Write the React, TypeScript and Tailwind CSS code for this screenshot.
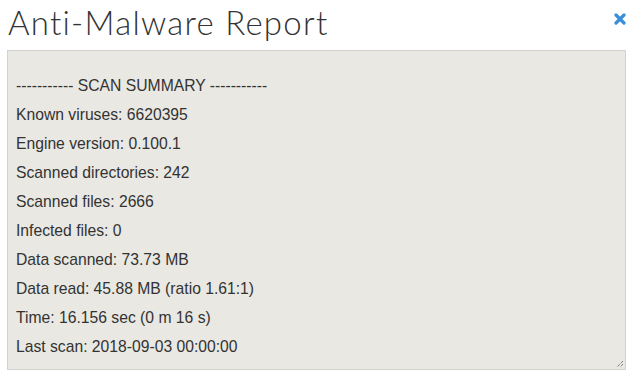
export default function App() {
  const lines = [
    '----------- SCAN SUMMARY -----------',
    'Known viruses: 6620395',
    'Engine version: 0.100.1',
    'Scanned directories: 242',
    'Scanned files: 2666',
    'Infected files: 0',
    'Data scanned: 73.73 MB',
    'Data read: 45.88 MB (ratio 1.61:1)',
    'Time: 16.156 sec (0 m 16 s)',
    'Last scan: 2018-09-03 00:00:00',
  ];

  return (
    <div className="h-[376px] w-[633px] bg-white">
      {/* 헤더: 제목 + 닫기 */}
      <div className="flex h-[50px] items-start justify-between pl-[8px] pr-[7px]">
        <h1 className="mt-[2px] font-['Lato',sans-serif] text-[33px] font-light leading-[40px] tracking-[1.25px] text-[#333]">
          Anti-Malware Report
        </h1>
        <button className="mt-[13px] text-[#3b8fd8]">
          <svg width="12" height="12" viewBox="0 0 12 12">
            <path d="M2 2 L10 10 M10 2 L2 10" stroke="currentColor" strokeWidth="3.2" strokeLinecap="round" />
          </svg>
        </button>
      </div>

      {/* 결과 박스 */}
      <div className="relative mx-[7px] h-[320px] border border-[#d2d2cf] bg-[#e9e8e2] pl-[8px] pt-[20px] font-['Liberation_Sans',Arial,sans-serif] text-[15.7px] leading-[29px] text-[#333]">
        {lines.map((l) => (
          <div key={l}>{l}</div>
        ))}
        <svg className="absolute bottom-[1px] right-[1px]" width="8" height="8" viewBox="0 0 8 8">
          <path d="M7 1 L1 7 M7 4 L4 7" stroke="#555" strokeWidth="1" strokeDasharray="1 1" />
        </svg>
      </div>
    </div>
  );
}
